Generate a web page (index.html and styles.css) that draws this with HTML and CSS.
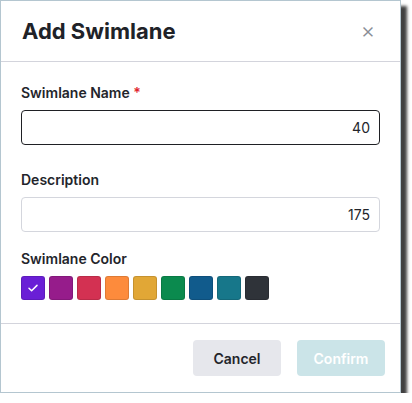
FILE: index.html
```html
<!DOCTYPE html>
<html lang="en">
	<head>
		<meta charset="utf-8">
		<title>Add Swimlane</title>
		<link rel="stylesheet" href="styles.css">
	</head>
	<body>
		<div class="modal">
			<div class="modal-head">
				<h2 class="modal-title">Add Swimlane</h2>
				<span class="modal-close">&#215;</span>
			</div>
			<div class="modal-body">
				<div class="field field-name">
					<label class="field-label">Swimlane Name <span class="req">*</span></label>
					<div class="input input-active">40</div>
				</div>
				<div class="field">
					<label class="field-label">Description</label>
					<div class="input">175</div>
				</div>
				<div class="field">
					<label class="field-label">Swimlane Color</label>
					<div class="swatches">
						<span class="swatch sel" style="background:#6a1fd6">
							<svg width="12" height="12" viewBox="0 0 12 12"><path d="M2 6.3l2.6 2.5L10 3.4" fill="none" stroke="#fff" stroke-width="1.5" stroke-linecap="round" stroke-linejoin="round"/></svg>
						</span>
						<span class="swatch" style="background:#961c8b"></span>
						<span class="swatch" style="background:#d33152"></span>
						<span class="swatch" style="background:#fd8b3c"></span>
						<span class="swatch" style="background:#e1a736"></span>
						<span class="swatch" style="background:#0b8a4e"></span>
						<span class="swatch" style="background:#115b8c"></span>
						<span class="swatch" style="background:#17778a"></span>
						<span class="swatch" style="background:#2f3339"></span>
					</div>
				</div>
			</div>
			<div class="modal-foot">
				<button class="btn btn-cancel">Cancel</button>
				<button class="btn btn-confirm">Confirm</button>
			</div>
		</div>
	</body>
</html>
```

FILE: styles.css
```css
body{
	margin:0;
	padding:0;
	background:#fff;
	font-family:Inter,"Noto Sans",sans-serif;
	color:#23252b;
}
.modal{
	width:399px;
	height:391px;
	background:#fff;
	border:1px solid #b4c6d0;
	box-shadow:6px 6px 3px #404040;
	display:flex;
	flex-direction:column;
}
.modal-head{
	height:60px;
	border-bottom:1px solid #d3d4dc;
	display:flex;
	align-items:center;
	justify-content:space-between;
	padding:0 25px 0 21px;
}
.modal-title{
	margin:0;
	font-size:22px;
	font-weight:700;
	color:#202228;
}
.modal-close{
	font-size:22px;
	font-weight:300;
	color:#8a8d96;
	line-height:1;
	margin-top:-2px;
}
.modal-body{
	flex:1;
	padding:22px 20px 0 20px;
	border-bottom:1px solid #d3d4dc;
}
.field{
	margin-bottom:18px;
}
.field-name{
	margin-bottom:26px;
}
.field-label{
	display:block;
	font-size:14px;
	font-weight:600;
	line-height:18px;
	margin-bottom:8px;
	color:#23252b;
}
.req{
	color:#e0242c;
}
.input{
	height:33px;
	border:1px solid #d4d6dd;
	border-radius:4px;
	font-size:14px;
	line-height:33px;
	text-align:right;
	padding:0 9px;
	color:#23252b;
}
.input-active{
	border-color:#1f2024;
}
.swatches{
	display:flex;
	gap:4px;
}
.swatch{
	width:24px;
	height:24px;
	border-radius:3px;
	box-sizing:border-box;
	border:1px solid rgba(0,0,0,.12);
	display:flex;
	align-items:center;
	justify-content:center;
}
.modal-foot{
	height:68px;
	display:flex;
	align-items:center;
	justify-content:flex-end;
	gap:16px;
	padding:0 15px 0 0;
}
.btn{
	width:88px;
	height:36px;
	border:none;
	border-radius:4px;
	font-family:Inter,"Noto Sans",sans-serif;
	font-size:14px;
	font-weight:600;
}
.btn-cancel{
	background:#e6e7ec;
	color:#23252b;
}
.btn-confirm{
	background:#cbe4e8;
	color:#fff;
}
```
